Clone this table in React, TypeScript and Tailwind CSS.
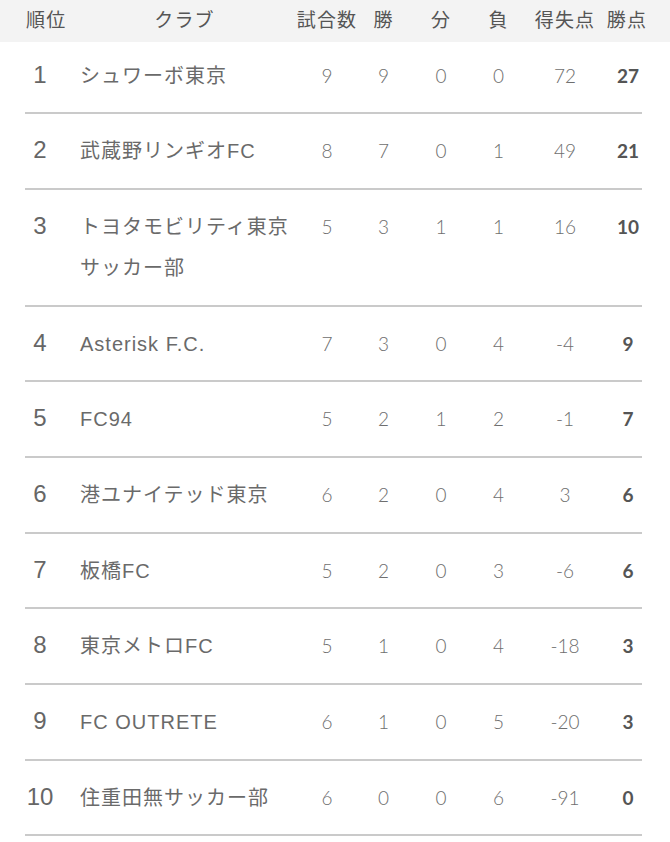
import React from "react";

type Row = { rank: number; club: string; p: number; w: number; d: number; l: number; gd: number; pts: number };

const rows: Row[] = [
  { rank: 1, club: "シュワーボ東京", p: 9, w: 9, d: 0, l: 0, gd: 72, pts: 27 },
  { rank: 2, club: "武蔵野リンギオFC", p: 8, w: 7, d: 0, l: 1, gd: 49, pts: 21 },
  { rank: 3, club: "トヨタモビリティ東京サッカー部", p: 5, w: 3, d: 1, l: 1, gd: 16, pts: 10 },
  { rank: 4, club: "Asterisk F.C.", p: 7, w: 3, d: 0, l: 4, gd: -4, pts: 9 },
  { rank: 5, club: "FC94", p: 5, w: 2, d: 1, l: 2, gd: -1, pts: 7 },
  { rank: 6, club: "港ユナイテッド東京", p: 6, w: 2, d: 0, l: 4, gd: 3, pts: 6 },
  { rank: 7, club: "板橋FC", p: 5, w: 2, d: 0, l: 3, gd: -6, pts: 6 },
  { rank: 8, club: "東京メトロFC", p: 5, w: 1, d: 0, l: 4, gd: -18, pts: 3 },
  { rank: 9, club: "FC OUTRETE", p: 6, w: 1, d: 0, l: 5, gd: -20, pts: 3 },
  { rank: 10, club: "住重田無サッカー部", p: 6, w: 0, d: 0, l: 6, gd: -91, pts: 0 },
];

const jp = { fontFamily: '"Liberation Sans", "Noto Sans CJK JP", sans-serif' };
const num = { fontFamily: 'Lato, "Liberation Sans", sans-serif' };

export default function App() {
  return (
    <div className="w-[670px] min-h-[842px] bg-white" style={jp}>
      <div className="h-[42px] bg-[#f3f3f3] pl-[25px]">
        <div className="grid h-full w-[617px] grid-cols-[45px_229px_56px_57px_58px_57px_76px_39px] items-center text-[19px] tracking-[1.2px] text-[#555]">
          <div className="pl-[1px] whitespace-nowrap">順位</div>
          <div className="flex justify-center whitespace-nowrap">クラブ</div>
          <div className="flex justify-center whitespace-nowrap">試合数</div>
          <div className="flex justify-center whitespace-nowrap">勝</div>
          <div className="flex justify-center whitespace-nowrap">分</div>
          <div className="flex justify-center whitespace-nowrap">負</div>
          <div className="flex justify-center whitespace-nowrap">得失点</div>
          <div className="flex justify-center whitespace-nowrap pl-[9px]">勝点</div>
        </div>
      </div>
      <div className="pl-[25px]">
        {rows.map((r, i) => (
          <div
            key={r.rank}
            className={`grid w-[617px] grid-cols-[30px_244px_56px_57px_58px_57px_76px_39px] items-baseline border-b-2 border-[#cacaca] pb-[15.7px] leading-[41px] ${i === 0 ? "pt-[12.5px]" : "pt-[16px]"}`}
          >
            <div className="text-center text-[24px] leading-[36px] text-[#666]" style={{ fontFamily: '"Liberation Sans", sans-serif' }}>
              {r.rank}
            </div>
            <div className="pl-[25px] text-[20px] tracking-[1px] text-[#6a6a6a]">{r.club}</div>
            <div className="text-center text-[19px] font-light text-[#6e6e6e]" style={num}>{r.p}</div>
            <div className="text-center text-[19px] font-light text-[#6e6e6e]" style={num}>{r.w}</div>
            <div className="text-center text-[19px] font-light text-[#6e6e6e]" style={num}>{r.d}</div>
            <div className="text-center text-[19px] font-light text-[#6e6e6e]" style={num}>{r.l}</div>
            <div className="text-center text-[19px] font-light text-[#6e6e6e]" style={num}>{r.gd}</div>
            <div className="pl-[11px] text-center text-[19px] font-bold text-[#555]" style={num}>{r.pts}</div>
          </div>
        ))}
      </div>
    </div>
  );
}
